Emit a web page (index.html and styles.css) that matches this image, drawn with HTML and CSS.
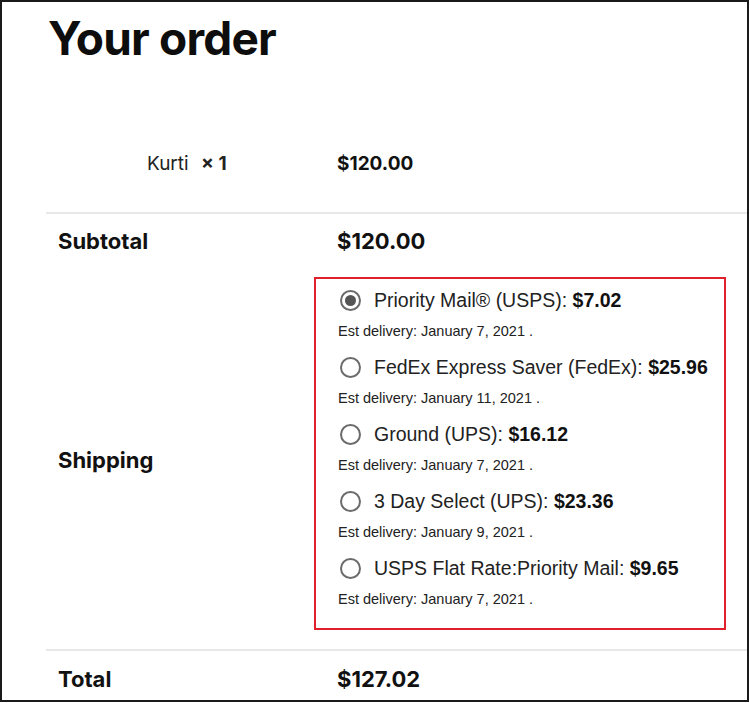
FILE: index.html
```html
<!DOCTYPE html>
<html lang="en">
<head>
    <meta charset="UTF-8">
    <meta name="viewport" content="width=device-width, initial-scale=1.0">
    <title>Your order</title>
    <link rel="stylesheet" href="styles.css">
</head>
<body>

<div class="frame">
    <h1 class="order-title">Your order</h1>

    <div class="order-table">
        <div class="row item-row">
            <div class="label item-name">Kurti <strong class="qty">×&nbsp;1</strong></div>
            <div class="value item-price">$120.00</div>
        </div>

        <div class="row subtotal-row">
            <div class="label">Subtotal</div>
            <div class="value">$120.00</div>
        </div>

        <div class="row shipping-row">
            <div class="label">Shipping</div>
            <div class="value">
                <ul class="methods">
                    <li class="method">
                        <label class="method-line">
                            <span class="radio checked"></span>
                            <span>Priority Mail® (USPS): <b>$7.02</b></span>
                        </label>
                        <div class="est">Est delivery: January 7, 2021 .</div>
                    </li>
                    <li class="method">
                        <label class="method-line">
                            <span class="radio"></span>
                            <span>FedEx Express Saver (FedEx): <b>$25.96</b></span>
                        </label>
                        <div class="est">Est delivery: January 11, 2021 .</div>
                    </li>
                    <li class="method">
                        <label class="method-line">
                            <span class="radio"></span>
                            <span>Ground (UPS): <b>$16.12</b></span>
                        </label>
                        <div class="est">Est delivery: January 7, 2021 .</div>
                    </li>
                    <li class="method">
                        <label class="method-line">
                            <span class="radio"></span>
                            <span>3 Day Select (UPS): <b>$23.36</b></span>
                        </label>
                        <div class="est">Est delivery: January 9, 2021 .</div>
                    </li>
                    <li class="method">
                        <label class="method-line">
                            <span class="radio"></span>
                            <span>USPS Flat Rate:Priority Mail: <b>$9.65</b></span>
                        </label>
                        <div class="est">Est delivery: January 7, 2021 .</div>
                    </li>
                </ul>
            </div>
        </div>

        <div class="row total-row">
            <div class="label">Total</div>
            <div class="value">$127.02</div>
        </div>
    </div>
</div>

</body>
</html>
```

FILE: styles.css
```css
html, body {
    margin: 0;
    padding: 0;
    background: #fff;
}
body {
    font-family: Inter, "Noto Sans", sans-serif;
    color: #111;
}
.frame {
    box-sizing: border-box;
    width: 749px;
    height: 702px;
    border: 2px solid #1a1a1a;
    padding-left: 44px;
    overflow: hidden;
}
.order-title {
    margin: 8px 0 0 2px;
    font-size: 46px;
    line-height: 56px;
    font-weight: 700;
    letter-spacing: -0.8px;
    color: #0d0d0d;
}
.row {
    display: flex;
    align-items: center;
    border-top: 2px solid #e8e8e8;
}
.row.item-row {
    box-sizing: border-box;
    border-top: none;
    height: 146px;
    padding-top: 48px;
}
.label {
    box-sizing: border-box;
    width: 279px;
    padding-left: 12px;
    font-size: 22px;
    font-weight: 700;
    flex-shrink: 0;
}
.value {
    padding-left: 12px;
    font-size: 22px;
    font-weight: 700;
}
.item-name {
    padding-left: 101px;
    font-size: 19px;
    font-weight: 400;
    color: #222;
}
.qty {
    margin-left: 7px;
}
.item-price {
    font-size: 19px;
}
.subtotal-row {
    height: 54px;
    padding-bottom: 3px;
}
.shipping-row {
    border-top: none;
    padding: 6px 0 19px;
}
.shipping-row .label {
    padding-top: 12px;
}
.methods {
    list-style: none;
    box-sizing: border-box;
    width: 412px;
    margin: 0 0 0 -23px;
    padding: 8px 0 6px 22px;
    border: 2px solid #e0202c;
    font-family: "Liberation Sans", Arial, sans-serif;
    font-weight: 400;
}
.method {
    margin-bottom: 13px;
}
.method-line {
    display: flex;
    align-items: center;
    height: 26px;
    font-size: 19.5px;
    color: #222;
}
.method-line b {
    color: #111;
}
.radio {
    box-sizing: border-box;
    width: 21px;
    height: 21px;
    margin: 0 13px 0 2px;
    border: 2px solid #6b6b6b;
    border-radius: 50%;
    display: flex;
    align-items: center;
    justify-content: center;
    flex-shrink: 0;
}
.radio.checked::after {
    content: "";
    width: 11px;
    height: 11px;
    border-radius: 50%;
    background: #555;
}
.est {
    margin-top: 8px;
    height: 20px;
    line-height: 21px;
    font-size: 14.5px;
    color: #222;
}
.total-row {
    height: 56px;
}
```
